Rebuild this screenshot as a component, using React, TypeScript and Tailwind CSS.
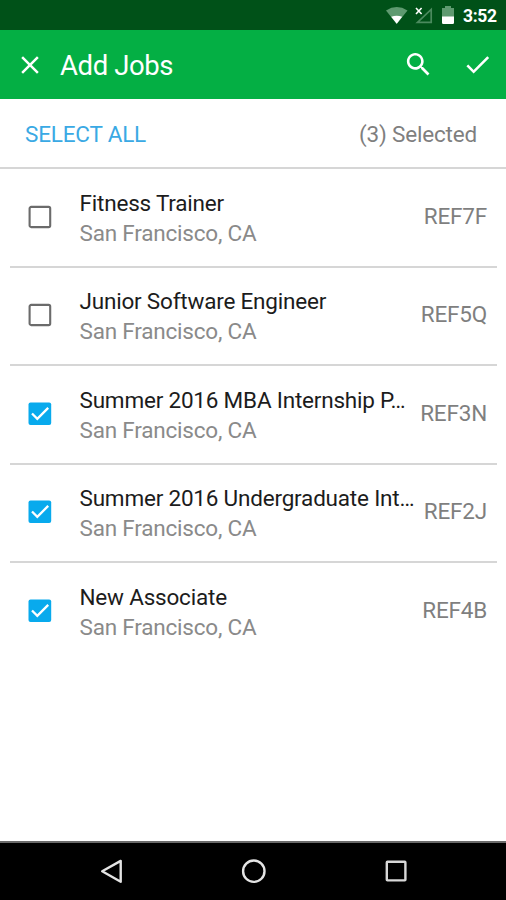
import { useState } from "react";

type Job = {
  title: string;
  location: string;
  code: string;
  selected: boolean;
};

const initialJobs: Job[] = [
  { title: "Fitness Trainer", location: "San Francisco, CA", code: "REF7F", selected: false },
  { title: "Junior Software Engineer", location: "San Francisco, CA", code: "REF5Q", selected: false },
  { title: "Summer 2016 MBA Internship P…", location: "San Francisco, CA", code: "REF3N", selected: true },
  { title: "Summer 2016 Undergraduate Int…", location: "San Francisco, CA", code: "REF2J", selected: true },
  { title: "New Associate", location: "San Francisco, CA", code: "REF4B", selected: true },
];

function StatusBar() {
  return (
    <div className="flex h-[30px] shrink-0 items-center justify-end bg-[#005118] pr-[9px] text-white">
      <svg className="h-[30px] w-[70px]" viewBox="386 0 70 30">
        <path d="M386 10.5Q396.7 3.6 407.5 10.5L396.7 24Z" fill="#5e9a70" />
        <path d="M391.2 16.8Q396.7 14.8 402.2 16.8L396.7 23.8Z" fill="#fff" />
        <path d="M431.2 9.5V22.3H417.5Z" fill="none" stroke="#4b8a5e" strokeWidth="1.7" />
        <path d="M416 8l5.6 6M421.6 8L416 14" stroke="#fff" strokeWidth="1.6" />
        <path d="M442 8h3V6h6v2h3v9h-12z" fill="#5e9a70" />
        <path d="M442 16.5h12v6.2q0 1.3-1.3 1.3h-9.4q-1.3 0-1.3-1.3z" fill="#fff" />
      </svg>
      <span className="ml-[7px] w-[34px] pt-[2px] text-[17.5px] leading-[30px] font-bold tracking-[-0.3px]">3:52</span>
    </div>
  );
}

function Toolbar() {
  return (
    <header className="flex h-[69px] shrink-0 items-center bg-[#04af44] pr-[13px] pl-[15px] text-white">
      <button aria-label="Close">
        <svg className="size-[30px]" viewBox="0 0 24 24" fill="currentColor">
          <path d="M19 6.41L17.59 5 12 10.59 6.41 5 5 6.41 10.59 12 5 17.59 6.41 19 12 13.41 17.59 19 19 17.59 13.41 12z" />
        </svg>
      </button>
      <h1 className="ml-[15px] flex-1 pt-[3px] text-[27.5px] leading-8 tracking-[-0.4px]">Add Jobs</h1>
      <button aria-label="Search" className="mr-[28px]">
        <svg className="size-[31px]" viewBox="0 0 24 24" fill="currentColor">
          <path d="M15.5 14h-.79l-.28-.27C15.41 12.59 16 11.11 16 9.5 16 5.91 13.09 3 9.5 3S3 5.91 3 9.5 5.91 16 9.5 16c1.61 0 3.09-.59 4.23-1.57l.27.28v.79l5 4.99L20.49 19l-4.99-5zm-6 0C7.01 14 5 11.99 5 9.5S7.01 5 9.5 5 14 7.01 14 9.5 11.99 14 9.5 14z" />
        </svg>
      </button>
      <button aria-label="Done">
        <svg className="size-[31px]" viewBox="0 0 24 24" fill="currentColor">
          <path d="M9 16.17L4.83 12l-1.42 1.41L9 19 21 7l-1.41-1.41z" />
        </svg>
      </button>
    </header>
  );
}

function Checkbox({ checked }: { checked: boolean }) {
  return (
    <svg className="h-6 w-6 shrink-0" viewBox="0 0 24 24" fill="none">
      {checked ? (
        <>
          <rect x="0.5" y="0.5" width="22.7" height="22.5" rx="2" fill="#08aaed" />
          <path d="M4 11.5l5.3 5.3L20.2 5.9" stroke="#fff" strokeWidth="2.3" />
        </>
      ) : (
        <rect x="1.6" y="1.9" width="20.6" height="20.2" rx="1.6" stroke="#6b6b6b" strokeWidth="2.1" />
      )}
    </svg>
  );
}

function JobRow({ job, onToggle }: { job: Job; onToggle: () => void }) {
  return (
    <li
      onClick={onToggle}
      className="mr-[9px] ml-[10px] flex h-[98.5px] items-center border-b-2 border-[#d6d6d6] pr-[10px] pb-[0.6px] pl-[18px] last:border-transparent"
    >
      <Checkbox checked={job.selected} />
      <div className="ml-[27.5px] min-w-0 flex-1 pt-[2px] text-[22.5px] leading-[30px] tracking-[-0.2px] whitespace-nowrap">
        <p className="text-[#1c1c1c]">{job.title}</p>
        <p className="text-[#8a8a8a]">{job.location}</p>
      </div>
      <span className="pb-[2px] text-[22.5px] leading-[30px] tracking-[-0.2px] text-[#7f7f7f]">{job.code}</span>
    </li>
  );
}

function NavBar() {
  return (
    <nav className="flex h-[59px] shrink-0 items-center justify-center gap-[116px] border-t-2 border-[#6b6b6b] bg-black pb-[2px] pl-[2px]">
      <svg className="size-[26px]" viewBox="0 0 26 26" fill="none" stroke="#e4e4e4" strokeWidth="2.4" strokeLinejoin="round">
        <path d="M21.7 2.9v20.8L3.2 13.3z" />
      </svg>
      <svg className="size-[26px]" viewBox="0 0 26 26" fill="none" stroke="#e4e4e4" strokeWidth="2.4">
        <circle cx="12.8" cy="13.2" r="10.7" />
      </svg>
      <svg className="size-[26px]" viewBox="0 0 26 26" fill="none" stroke="#d8d8d8" strokeWidth="2.4">
        <rect x="3.8" y="3.8" width="18.6" height="18.6" rx="0.6" />
      </svg>
    </nav>
  );
}

export default function App() {
  const [jobs, setJobs] = useState(initialJobs);
  const count = jobs.filter((j) => j.selected).length;

  const toggle = (index: number) =>
    setJobs((prev) => prev.map((j, i) => (i === index ? { ...j, selected: !j.selected } : j)));

  return (
    <div className="flex h-[900px] w-[506px] flex-col overflow-hidden bg-white font-[Roboto,sans-serif]">
      <StatusBar />
      <Toolbar />
      <div className="flex h-[70px] shrink-0 items-center justify-between border-b-2 border-[#d6d6d6] pt-[3px] pr-[29px] pl-[25px] text-[22.5px] tracking-[-0.18px]">
        <button
          className="text-[#3aa9e4]"
          onClick={() => setJobs((prev) => prev.map((j) => ({ ...j, selected: true })))}
        >
          SELECT ALL
        </button>
        <span className="text-[#7f7f7f]">({count}) Selected</span>
      </div>
      <ul className="flex-1">
        {jobs.map((job, i) => (
          <JobRow key={job.code} job={job} onToggle={() => toggle(i)} />
        ))}
      </ul>
      <NavBar />
    </div>
  );
}
